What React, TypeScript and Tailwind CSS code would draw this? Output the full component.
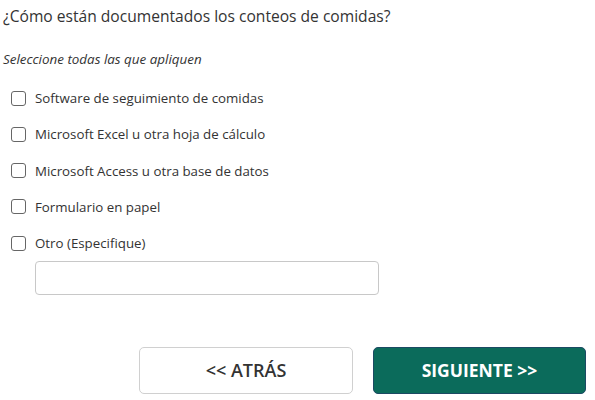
import React from "react";

const options = [
  "Software de seguimiento de comidas",
  "Microsoft Excel u otra hoja de cálculo",
  "Microsoft Access u otra base de datos",
  "Formulario en papel",
  "Otro (Especifique)",
];

export default function App() {
  return (
    <div
      className="w-[595px] h-[400px] bg-white text-[#333] relative overflow-hidden"
      style={{ fontFamily: '"Open Sans", "Noto Sans", sans-serif' }}
    >
      <div className="pl-[3px] pt-[5px]">
        <h1 className="text-[15.6px] leading-[22px] font-normal text-[#333]">
          ¿Cómo están documentados los conteos de comidas?
        </h1>
        <p className="mt-[24px] text-[13.4px] leading-[16px] italic text-[#333]">
          Seleccione todas las que apliquen
        </p>
        <div className="mt-[22px] flex flex-col gap-[18.3px]">
          {options.map((o) => (
            <label key={o} className="flex items-center h-[18px] pl-[8px]">
              <span className="w-[15px] h-[15px] rounded-[3px] border border-[#666] bg-white shrink-0" />
              <span className="ml-[9px] text-[13.3px] leading-[18px] text-[#333]">{o}</span>
            </label>
          ))}
        </div>
        <div className="mt-[9px] ml-[32px] w-[344px] h-[34px] border border-[#c8c8c8] rounded-[4px] bg-white" />
      </div>
      <div className="absolute left-[139px] top-[347px] flex gap-[20px]">
        <button className="w-[214px] h-[47px] border border-[#d0d0d0] rounded-[5px] bg-white text-[18px] font-semibold text-[#333]">
          &lt;&lt; ATRÁS
        </button>
        <button className="w-[213px] h-[47px] border border-[#1c4a63] rounded-[5px] bg-[#0b6b5b] text-[17.5px] font-bold text-white">
          SIGUIENTE &gt;&gt;
        </button>
      </div>
    </div>
  );
}
